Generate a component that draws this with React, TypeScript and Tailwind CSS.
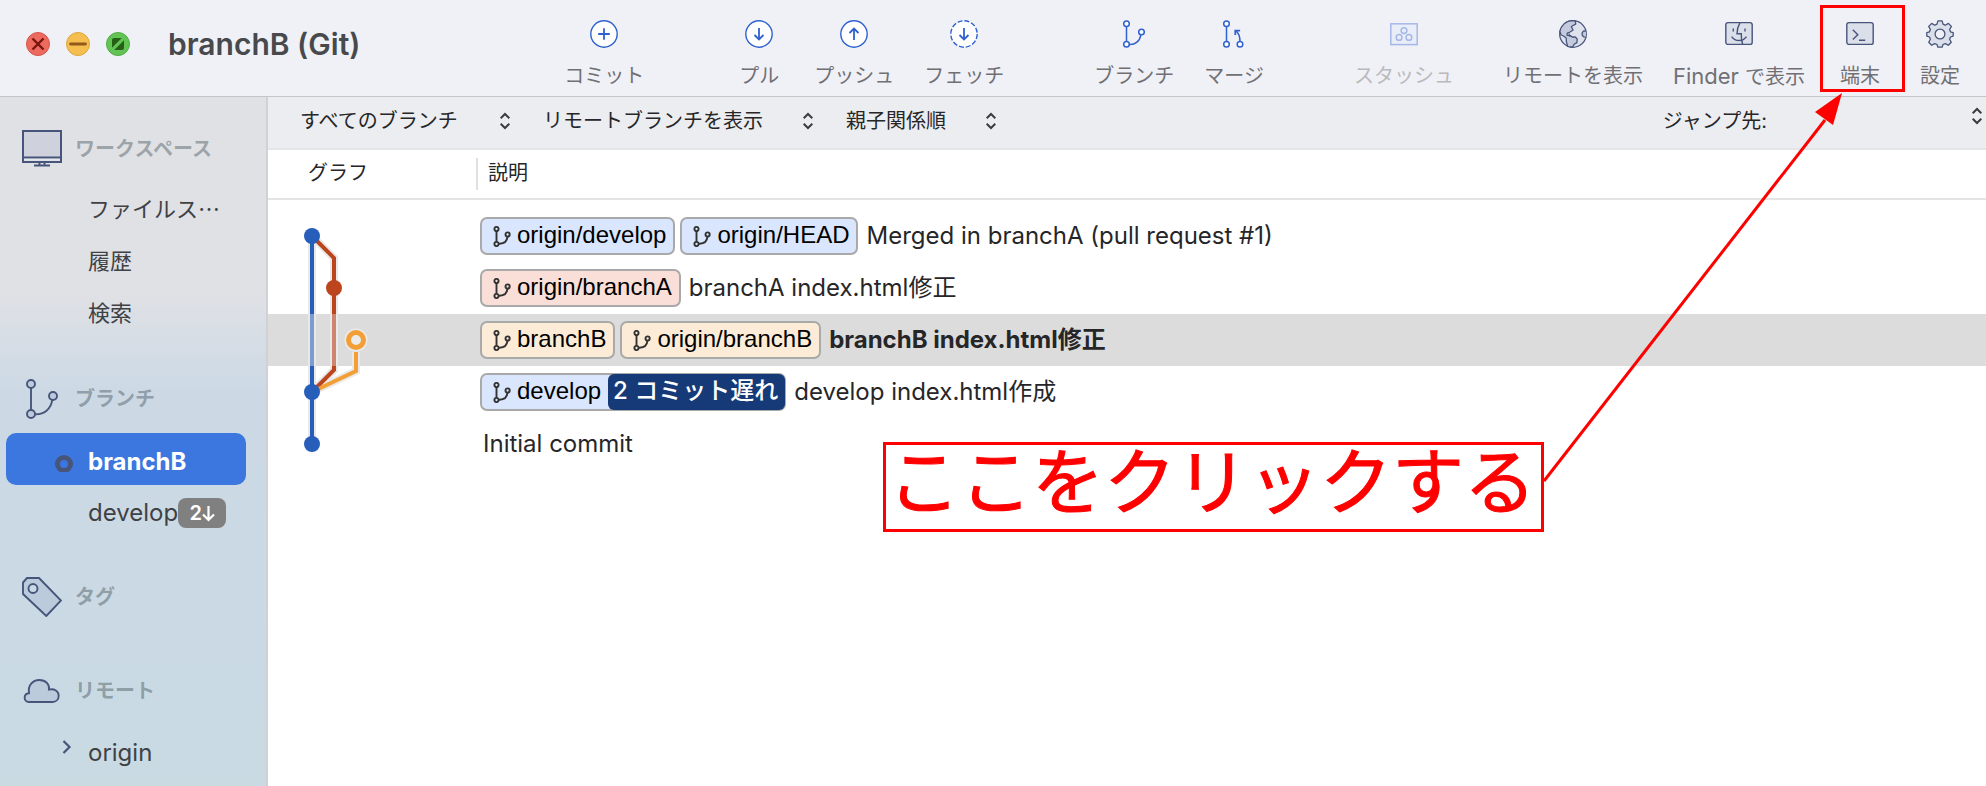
import type { ReactNode } from "react";

const NAVY = "#47557a";
const BLUE = "#2f62cf";

function CircleIcon({ children, dashed }: { children: ReactNode; dashed?: boolean }) {
  return (
    <svg width="28" height="28" viewBox="0 0 28 28" fill="none" stroke={BLUE} strokeWidth="1.4" aria-hidden="true">
      <circle cx="14" cy="14" r="13.2" fill="#fff" strokeDasharray={dashed ? "5 1.91" : undefined} />
      <g strokeWidth="1.8">{children}</g>
    </svg>
  );
}

const PlusIcon = () => (
  <CircleIcon>
    <path d="M14 8.2v11.6M8.2 14h11.6" />
  </CircleIcon>
);
const DownIcon = ({ dashed }: { dashed?: boolean }) => (
  <CircleIcon dashed={dashed}>
    <path d="M14 8v11.5M9.5 15l4.5 4.4 4.5-4.4" />
  </CircleIcon>
);
const UpIcon = () => (
  <CircleIcon>
    <path d="M14 20V8.600M9.500 13l4.500-4.400 4.500 4.400" />
  </CircleIcon>
);
const BranchIcon = () => (
  <svg width="28" height="28" viewBox="0 0 28 28" fill="none" stroke={BLUE} strokeWidth="1.5" aria-hidden="true">
    <path d="M6.500 6.600v15M9.200 24.500c6 .4 10.800-3.600 11.600-9.700" />
    <circle cx="6.500" cy="3.700" r="2.800" fill="#fff" />
    <circle cx="6.500" cy="24.300" r="2.800" fill="#fff" />
    <circle cx="21.500" cy="12" r="2.800" fill="#fff" />
  </svg>
);
const MergeIcon = () => (
  <svg width="28" height="28" viewBox="0 0 28 28" fill="none" stroke={BLUE} strokeWidth="1.5" aria-hidden="true">
    <path d="M6.500 6.600v15M20 21.500c0-4.600-.9-8-4-10.600" />
    <path d="M15.300 15v-4.300h4.800" strokeWidth="1.800" />
    <circle cx="6.500" cy="3.700" r="2.800" fill="#fff" />
    <circle cx="6.500" cy="24.300" r="2.800" fill="#fff" />
    <circle cx="20" cy="24.300" r="2.800" fill="#fff" />
  </svg>
);
const StashIcon = () => (
  <svg width="28" height="28" viewBox="0 0 28 28" fill="none" stroke="#a6b8e8" strokeWidth="1.5" aria-hidden="true">
    <rect x="0.800" y="3.800" width="26.400" height="20.800" fill="#e9edf7" />
    <circle cx="14" cy="10.600" r="2.900" />
    <circle cx="9.100" cy="17.400" r="2.900" />
    <circle cx="18.900" cy="17.400" r="2.900" />
  </svg>
);
const GlobeIcon = () => (
  <svg width="28" height="28" viewBox="0 0 28 28" stroke={NAVY} strokeWidth="1.300" strokeLinejoin="round" aria-hidden="true">
    <circle cx="14" cy="14" r="13.300" fill="#dfe2ec" />
    <path
      d="M16.300 1l.4 3.200-2.700 1.300-1.700 1.200 1.800 3.300-3 2-2.800 1.200-.2 2.100 3.500.4 1.500 1.300h3.100l2 2-.3 3.600-2.700 1.700-1.700 2.700h-2.600l-2.300-.7-1.200-4.600-.2-3.700-2.700-2-2.400-1-1.200-3.500C2 5.500 7 .8 13 .7z"
      fill="#c3cadd"
    />
    <path d="M9.800 13.400l1.400 3.300" fill="none" />
    <path d="M27 11.200l-2.200-.4-1.600 1.900v2.600l1.500 1.600 2.200.2" fill="#c3cadd" />
  </svg>
);
const FinderIcon = () => (
  <svg width="28" height="28" viewBox="0 0 28 28" fill="none" stroke={NAVY} strokeWidth="1.400" aria-hidden="true">
    <rect x="0.800" y="2.600" width="26.400" height="21.800" rx="2.200" fill="#dbdfe9" />
    <path d="M8.300 8.600v3M20 8.600v3M6.600 16.600c3.700 5.200 11.200 5.200 14.900 0" />
    <path d="M15 2.600c-2 3.400-2.900 7-3 11.200h4.300c-.2 4 .2 7.300 1.400 10.600" />
  </svg>
);
const TerminalIcon = () => (
  <svg width="28" height="28" viewBox="0 0 28 28" fill="none" stroke={NAVY} strokeWidth="1.400" aria-hidden="true">
    <rect x="0.800" y="2.600" width="26.400" height="21.800" rx="2.200" fill="#dbdfe9" />
    <path d="M6.800 9.800l5 4.900-5 4.900M13 20.300h6.200" />
  </svg>
);
const GearIcon = () => (
  <svg width="28" height="28" viewBox="0 0 28 28" stroke={NAVY} strokeWidth="1.300" strokeLinejoin="round" aria-hidden="true">
    <path
      d="M11.900.8h4.200l.9 3.400 2.300 1 3.100-1.800 3 3-1.800 3.100.9 2.300 2.700.9v3.400l-2.700.9-.9 2.300 1.700 3-3 3-3-1.700-2.300.9-.9 2.700h-4.200l-.9-2.700-2.300-.9-3 1.700-3-3 1.700-3-.9-2.300-2.700-.9v-3.400l2.700-.9.900-2.300-1.700-3.100 3-3 3 1.800 2.300-1z"
      fill="#dbdfe9"
    />
    <circle cx="14" cy="14" r="4.900" fill="#f0f1f6" />
  </svg>
);

function ToolButton({
  label,
  icon,
  disabled,
  highlighted,
}: {
  label: ReactNode;
  icon: ReactNode;
  disabled?: boolean;
  highlighted?: boolean;
}) {
  return (
    <button
      type="button"
      disabled={disabled}
      className="relative flex h-24 min-w-[50px] shrink-0 flex-col items-center gap-[14px] pt-5 text-xl leading-7 whitespace-nowrap text-[#707074] disabled:text-[#b9babd]"
    >
      {icon}
      <span>{label}</span>
      {highlighted && <span className="absolute top-[5px] -right-5 -left-[15px] h-[87px] border-3 border-[#ff0000]" />}
    </button>
  );
}

function Chevrons() {
  return (
    <svg width="12" height="18" viewBox="0 0 12 18" fill="none" stroke="#3c3c3e" strokeWidth="2" aria-hidden="true">
      <path d="M1.700 6.200L6 2l4.300 4.200M1.700 11.800L6 16l4.300-4.200" />
    </svg>
  );
}

function Filter({ label, value }: { label: string; value: string }) {
  return (
    <span className="relative flex items-center">
      <select aria-label={label} className="appearance-none bg-transparent pr-[51px] text-xl leading-7 text-[#262628]">
        <option>{value}</option>
      </select>
      <span className="pointer-events-none absolute right-0">
        <Chevrons />
      </span>
    </span>
  );
}

const MonitorIcon = () => (
  <svg width="40" height="38" viewBox="0 0 40 38" fill="none" stroke={NAVY} strokeWidth="2" aria-hidden="true">
    <rect x="1" y="1" width="38" height="31" fill="#cfd2dd" />
    <path d="M1 27.500h38M12 35.500h16M17.500 32v3M22.500 32v3" />
    <path d="M2 29.700h36" stroke="#e4e6ec" />
  </svg>
);
const SideBranchIcon = () => (
  <svg width="40" height="40" viewBox="0 0 40 40" fill="none" stroke={NAVY} strokeWidth="1.900" aria-hidden="true">
    <path d="M9 9v22M13 35.300c9 .4 16-5 17.300-14.600" />
    <circle cx="9" cy="5" r="4" fill="#bccbdc" />
    <circle cx="9" cy="35" r="4" fill="#bccbdc" />
    <circle cx="31" cy="17" r="4" fill="#bccbdc" />
  </svg>
);
const TagIcon = () => (
  <svg width="40" height="40" viewBox="0 0 40 40" fill="#bccbdc" stroke={NAVY} strokeWidth="1.900" aria-hidden="true">
    <path d="M1 5.500L5 1h12l22 22.500L24.300 39 1 17z" />
    <circle cx="11" cy="11.500" r="4.500" fill="#c9d9e5" />
  </svg>
);
const CloudIcon = () => (
  <svg width="40" height="26" viewBox="0 0 40 26" fill="#bccbdc" stroke={NAVY} strokeWidth="1.900" aria-hidden="true">
    <path d="M7 24c-5.800 0-5.800-8.400 0-8.800C5.600 7.500 10.800 2 17.300 2c6.600 0 10.500 4.500 9.700 9.600 5.400-1.200 9.700 1.600 9.700 6.100 0 3.600-2.600 6.300-6.200 6.300z" />
  </svg>
);

function SideHeading({ icon, children }: { icon: ReactNode; children: ReactNode }) {
  return (
    <h2 className="flex h-[70px] items-center pt-[2px] pl-[22px] text-xl font-bold text-[#2e3f46]/40">
      <span className="flex w-[53px] shrink-0">{icon}</span>
      {children}
    </h2>
  );
}

function SideItem({
  children,
  marker,
  selected,
  latin,
}: {
  children: ReactNode;
  marker?: ReactNode;
  selected?: boolean;
  latin?: boolean;
}) {
  return (
    <li className={latin ? "text-2xl" : "text-[22px]"}>
      <a
        href="#"
        className={
          selected
            ? "mr-5 ml-[6px] flex h-[52px] items-center rounded-[10px] bg-[#3c77df] pt-[6px] pl-12 font-bold text-white"
            : latin
              ? "flex h-[52px] items-center pt-1 pl-[54px] text-[#3f4245]"
              : "flex h-[52px] items-center pl-[54px] text-[#3f4245]"
        }
      >
        <span className="flex w-[34px] shrink-0">{marker}</span>
        {children}
      </a>
    </li>
  );
}

function RefTag({ name, tone, behind }: { name: string; tone: string; behind?: string }) {
  return (
    <span
      className={`flex h-[38px] shrink-0 items-center rounded-[7px] border-2 border-[#a9a9a9] pl-[11px] font-['Liberation_Sans','Noto_Sans_CJK_JP',sans-serif] text-2xl leading-8 text-black ${tone}`}
    >
      <svg width="18" height="21" viewBox="0 0 18 21" fill="none" stroke="#333" strokeWidth="1.900" className="mr-[6px]" aria-hidden="true">
        <path d="M3.500 5v11M6 17.700c4.700.2 8-2.400 8.500-7" />
        <circle cx="3.500" cy="3" r="2.100" />
        <circle cx="3.500" cy="18" r="2.100" />
        <circle cx="14.600" cy="8.500" r="2.100" />
      </svg>
      <span className="pr-[7px] pb-[2px]">{name}</span>
      {behind && (
        <span className="-mr-px flex h-9 items-center rounded-md bg-[#163a78] pr-[7px] pb-[2px] pl-[5px] font-['Inter','Noto_Sans_CJK_JP',sans-serif] font-medium text-white">
          {behind}
        </span>
      )}
    </span>
  );
}

type Ref = { name: string; tone: string; behind?: string };
const LIGHT_BLUE = "bg-[#d9e6fd]";
const commits: { refs: Ref[]; message: string; selected?: boolean }[] = [
  {
    refs: [
      { name: "origin/develop", tone: LIGHT_BLUE },
      { name: "origin/HEAD", tone: LIGHT_BLUE },
    ],
    message: "Merged in branchA (pull request #1)",
  },
  { refs: [{ name: "origin/branchA", tone: "bg-[#f9dfd7]" }], message: "branchA index.html修正" },
  {
    refs: [
      { name: "branchB", tone: "bg-[#fcecd7]" },
      { name: "origin/branchB", tone: "bg-[#fcecd7]" },
    ],
    message: "branchB index.html修正",
    selected: true,
  },
  { refs: [{ name: "develop", tone: LIGHT_BLUE, behind: "2 コミット遅れ" }], message: "develop index.html作成" },
  { refs: [], message: "Initial commit" },
];

function CommitGraph() {
  return (
    <svg width="80" height="260" viewBox="0 0 80 260" fill="none" className="pointer-events-none absolute top-[60px] left-5" aria-hidden="true">
      <g stroke="#e9e9e9" strokeWidth="8">
        <path d="M24 26v208" />
        <path d="M24 26l22 22v112L24 182" />
        <path d="M68 142v19l-44 21" />
      </g>
      <path d="M24 26l22 22v56M46 156v4L24 182" stroke="#bd451d" strokeWidth="4" />
      <path d="M46 104v52" stroke="#cd8570" strokeWidth="4" />
      <path d="M68 142v19l-44 21" stroke="#f2a036" strokeWidth="4" />
      <path d="M24 26v78M24 156v78" stroke="#275eb9" strokeWidth="4" />
      <path d="M24 104v52" stroke="#7a9ccf" strokeWidth="4" />
      <circle cx="24" cy="26" r="8" fill="#275eb9" />
      <circle cx="46" cy="78" r="8" fill="#bd451d" />
      <circle cx="24" cy="182" r="8" fill="#275eb9" />
      <circle cx="24" cy="234" r="8" fill="#275eb9" />
      <circle cx="68" cy="130" r="11.500" fill="#ebebeb" />
      <circle cx="68" cy="130" r="7.500" stroke="#f2a036" strokeWidth="5" />
    </svg>
  );
}

export default function App() {
  return (
    <div className="relative flex min-h-screen flex-col overflow-hidden bg-white font-['Inter','Noto_Sans_CJK_JP',sans-serif]">
      <header className="flex h-[97px] items-start border-b border-[#c4c5c9] bg-[#f0f1f6] pr-[21px]">
        <div className="flex h-[88px] items-center gap-4 pl-[26px]">
          <button type="button" aria-label="閉じる">
            <svg width="24" height="24" viewBox="0 0 24 24">
              <circle cx="12" cy="12" r="11.500" fill="#ec6a5e" stroke="#d5564c" />
              <path d="M6.500 6.500l11 11M17.500 6.500l-11 11" stroke="#7b150f" strokeWidth="2.400" />
            </svg>
          </button>
          <button type="button" aria-label="しまう">
            <svg width="24" height="24" viewBox="0 0 24 24">
              <circle cx="12" cy="12" r="11.500" fill="#f4bf4f" stroke="#dba63c" />
              <path d="M4.500 12h15" stroke="#925a1a" strokeWidth="2.800" strokeLinecap="round" />
            </svg>
          </button>
          <button type="button" aria-label="拡大">
            <svg width="24" height="24" viewBox="0 0 24 24">
              <circle cx="12" cy="12" r="11.500" fill="#61c454" stroke="#50ad45" />
              <path d="M6 15.800V8q0-2 2-2h7.800zM18 8.200V16q0 2-2 2H8.200z" fill="#275f17" />
            </svg>
          </button>
          <h1 className="ml-[22px] text-3xl font-semibold whitespace-nowrap text-[#48494c]">branchB (Git)</h1>
        </div>
        <nav aria-label="ツールバー" className="ml-auto flex">
          <div className="mr-[90px] flex">
            <ToolButton label="コミット" icon={<PlusIcon />} />
          </div>
          <div className="mr-[90px] flex gap-[30px]">
            <ToolButton label="プル" icon={<DownIcon />} />
            <ToolButton label="プッシュ" icon={<UpIcon />} />
            <ToolButton label="フェッチ" icon={<DownIcon dashed />} />
          </div>
          <div className="mr-[90px] flex gap-[30px]">
            <ToolButton label="ブランチ" icon={<BranchIcon />} />
            <ToolButton label="マージ" icon={<MergeIcon />} />
          </div>
          <div className="mr-[49px] flex">
            <ToolButton label="スタッシュ" icon={<StashIcon />} disabled />
          </div>
          <div className="flex gap-[30px]">
            <ToolButton label="リモートを表示" icon={<GlobeIcon />} />
            <ToolButton
              label={
                <>
                  <span className="text-[22px]">Finder </span>で表示
                </>
              }
              icon={<FinderIcon />}
            />
            <ToolButton label="端末" icon={<TerminalIcon />} highlighted />
            <ToolButton label="設定" icon={<GearIcon />} />
          </div>
        </nav>
      </header>

      <div className="flex flex-1">
        <aside className="flex w-[268px] shrink-0 flex-col gap-6 border-r-2 border-[#cfd1d4] bg-linear-to-b from-[#e0e1e5] from-28% via-[#ccd9e5] via-43% to-[#c9dae3] pt-4">
          <section>
            <SideHeading icon={<MonitorIcon />}>ワークスペース</SideHeading>
            <ul>
              <SideItem>ファイルス⋯</SideItem>
              <SideItem>履歴</SideItem>
              <SideItem>検索</SideItem>
            </ul>
          </section>
          <section>
            <SideHeading icon={<SideBranchIcon />}>ブランチ</SideHeading>
            <ul>
              <SideItem
                selected
                latin
                marker={
                  <svg width="20" height="20" viewBox="0 0 20 20" aria-hidden="true">
                    <circle cx="10" cy="12" r="6.500" fill="none" stroke="#47557a" strokeWidth="5" />
                  </svg>
                }
              >
                branchB
              </SideItem>
              <SideItem latin>
                develop
                <span className="flex h-[30px] w-12 items-center justify-center rounded-lg bg-[#808080] text-xl font-semibold text-white">
                  2
                  <svg width="13" height="17" viewBox="0 0 13 17" fill="none" stroke="#fff" strokeWidth="2.200" aria-hidden="true">
                    <path d="M6.500 1v14M1 9.500L6.500 15 12 9.500" />
                  </svg>
                </span>
              </SideItem>
            </ul>
          </section>
          <section>
            <SideHeading icon={<TagIcon />}>タグ</SideHeading>
          </section>
          <section>
            <SideHeading icon={<CloudIcon />}>リモート</SideHeading>
            <ul>
              <SideItem
                latin
                marker={
                  <svg width="20" height="26" viewBox="0 0 20 26" fill="none" stroke="#47557a" strokeWidth="2.200" aria-hidden="true">
                    <path d="M9.500 1l6 6-6 6" />
                  </svg>
                }
              >
                origin
              </SideItem>
            </ul>
          </section>
        </aside>

        <main className="flex min-w-0 flex-1 flex-col">
          <div className="flex h-[53px] items-center border-b-2 border-[#e4e5e8] bg-[#ecedf1] pr-[3px] pl-8">
            <div className="flex gap-8 pb-1">
              <Filter label="ブランチの範囲" value="すべてのブランチ" />
              <Filter label="リモートブランチ" value="リモートブランチを表示" />
              <Filter label="並び順" value="親子関係順" />
            </div>
            <label htmlFor="jump" className="ml-auto pb-1 text-xl leading-7 text-[#262628]">
              ジャンプ先:
            </label>
            <span className="relative flex h-full w-[216px] items-start justify-end pt-[10px]">
              <select id="jump" className="absolute inset-0 appearance-none bg-transparent" />
              <Chevrons />
            </span>
          </div>
          <div className="relative">
            <table className="w-full table-fixed border-collapse text-left text-[#262628]">
              <colgroup>
                <col className="w-[208px]" />
                <col />
              </colgroup>
              <thead>
                <tr className="h-[49px] border-b-2 border-[#e4e4e4] text-xl">
                  <th className="p-0 pb-[2px] pl-10 font-normal">グラフ</th>
                  <th className="p-0 font-normal">
                    <span className="flex h-8 items-center border-l-2 border-[#e0e0e0] pb-[2px] pl-[10px]">説明</span>
                  </th>
                </tr>
              </thead>
              <tbody>
                <tr className="h-[11px]" aria-hidden="true">
                  <td className="p-0" colSpan={2} />
                </tr>
                {commits.map((c) => (
                  <tr key={c.message} className={c.selected ? "h-[52px] bg-[#dcdcdc] font-bold" : "h-[52px]"}>
                    <td className="p-0" />
                    <td className="p-0">
                      <span className="flex h-[52px] items-center gap-[5px] pl-1 whitespace-nowrap">
                        {c.refs.map((r) => (
                          <span key={r.name} className="font-normal">
                            <RefTag {...r} />
                          </span>
                        ))}
                        <span className="pb-px pl-[3px] text-2xl">{c.message}</span>
                      </span>
                    </td>
                  </tr>
                ))}
              </tbody>
            </table>
            <CommitGraph />
          </div>
        </main>
      </div>

      <p className="absolute top-[442px] right-[442px] flex h-[90px] items-center border-3 border-[#ff0000] pr-[5px] pb-[10px] pl-[2px] text-7xl whitespace-nowrap text-[#ff0000] [-webkit-text-stroke:1px_#ff0000]">
        ここをクリックする
      </p>
      <svg width="300" height="390" viewBox="0 0 300 390" className="pointer-events-none absolute top-[93px] right-[143px]" aria-hidden="true">
        <path d="M1 388L282 27" stroke="#ff0000" strokeWidth="3" />
        <path d="M299 0L272 19L290 32z" fill="#ff0000" />
      </svg>
    </div>
  );
}
